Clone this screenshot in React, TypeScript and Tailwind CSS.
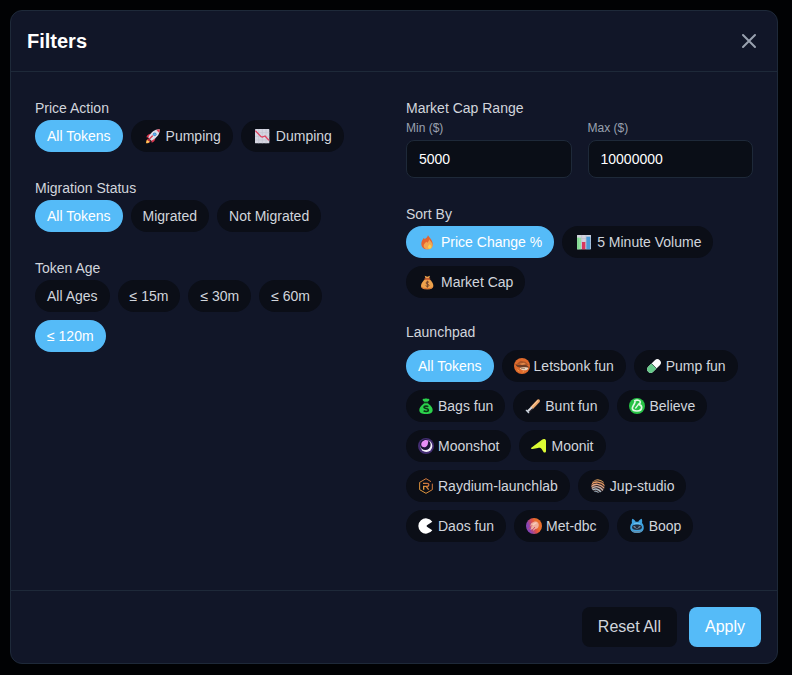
import * as React from "react";
import clsx from "clsx";

// ── Emoji icons ──────────────────────────────────────────────────────────────

interface IconProps {
  className?: string;
}

function Icon({ className, children }: IconProps & { children: React.ReactNode }) {
  return (
    <svg viewBox="0 0 48 48" aria-hidden="true" className={clsx("size-4 shrink-0", className)}>
      {children}
    </svg>
  );
}

function RocketIcon() {
  return (
    <Icon className="ml-0.5">
      <path d="M3 46c0-8 2-12 7-13l6 6c-1 5-5 7-13 7z" fill="#f9a03f" />
      <path d="M5 44c1-5 3-7 6-7l2 2c0 3-3 5-8 5z" fill="#ffd56b" />
      <path d="M18 17c-7 0-12 4-14 11l9 1zM31 30c0 7-4 12-11 14l-1-9z" fill="#d9374f" />
      <path d="M9 31l8 8-4 2-6-6z" fill="#b3263f" />
      <path d="M44 4c1 13-6 25-25 34L10 29C18 11 31 3 44 4z" fill="#dfe0ea" />
      <path d="M44 4c-4 0-7 1-10 2l8 8c2-3 2-7 2-10z" fill="#e2405a" />
      <circle cx="29" cy="19" r="5.5" fill="#3f7fc0" />
      <circle cx="29" cy="19" r="3.5" fill="#5fb4f0" />
      <path d="M13 33l9-9" stroke="#d9374f" strokeWidth="4" strokeLinecap="round" />
    </Icon>
  );
}

function ChartDownIcon() {
  return (
    <Icon className="ml-0.5">
      <rect y="3" width="43" height="43" rx="2" fill="#d6d6e2" />
      <path d="M0 14h43M0 25h43M0 36h43M11 3v43M22 3v43M33 3v43" stroke="#c2c2d0" strokeWidth="2" />
      <path d="M1 8l17 18 5 1 7-3 12 13" fill="none" stroke="#e0405f" strokeWidth="4" strokeLinejoin="round" />
    </Icon>
  );
}

function FireIcon() {
  return (
    <Icon className="ml-0.5">
      <path d="M24 3c1 6 14 13 14 27 0 10-7 16-17 16S4 39 4 29c0-8 4-13 8-18l2 5c3-3 9-6 10-13z" fill="#e5632f" />
      <path d="M27 16c2 5 11 9 11 18 0 8-6 12-14 12S11 41 11 35c0-6 5-9 8-12l3 3c3-2 5-5 5-10z" fill="#f2a650" />
      <path d="M29 30c4 4 5 6 5 9 0 3-2 5-5 5s-5-2-5-5 3-5 5-9z" fill="#fbd04b" />
    </Icon>
  );
}

function BarChartIcon() {
  return (
    <Icon className="ml-0.5">
      <rect x="3" y="3" width="42" height="43" rx="1" fill="#d3d3df" />
      <path d="M3 14h42M3 25h42M3 36h42M17 3v43M30 3v43" stroke="#bdbdcc" strokeWidth="2" />
      <path d="M4 11h11v35H4z" fill="#93e2a0" />
      <path d="M4 11h4v35H4z" fill="#7bd78c" />
      <path d="M18 24h10v22H18z" fill="#d8375f" />
      <path d="M31 8h12v38H31z" fill="#4a9bd8" />
    </Icon>
  );
}

function MoneyBagIcon() {
  return (
    <Icon className="ml-0.5">
      <path d="M14 5l8 3 8-3-3 9H17z" fill="#f0a24b" />
      <path d="M16 15h12c7 6 12 13 12 20 0 8-6 11-18 11S3 43 3 35c0-7 6-14 13-20z" fill="#eda24c" />
      <path d="M4 37c2 4 8 6 18 6s16-3 18-6c-1 7-8 9-18 9S5 44 4 37z" fill="#d5702f" />
      <path d="M15 15h14" stroke="#c4552d" strokeWidth="4" strokeLinecap="round" />
      <path d="M27 25c-2-2-9-2-9 2s9 3 9 7-7 4-10 1M22 20v21" fill="none" stroke="#6f432c" strokeWidth="3" />
    </Icon>
  );
}

// ── Launchpad logos ──────────────────────────────────────────────────────────

function BonkIcon() {
  return (
    <Icon>
      <circle cx="24" cy="24" r="24" fill="#df6a2c" />
      <path d="M9 17L20 8l14 3 10 9-18 2z" fill="#a8552a" />
      <path d="M4 19c12 3 22 1 30 2 6 1 10 4 11 8H20C12 29 6 25 4 19z" fill="#6b3c25" />
      <path d="M16 17l14-3 6 4-12 3z" fill="#e08a4c" />
      <path d="M17 30c6-3 14-3 26-1 0 5-5 8-12 8-6 0-11-2-14-7z" fill="#e6d6c2" />
      <path d="M21 31l12 1" stroke="#8a5a3a" strokeWidth="2" />
      <path d="M10 35l6 5M26 42l4-1" stroke="#f3a04a" strokeWidth="3" />
    </Icon>
  );
}

function PumpIcon() {
  return (
    <Icon>
      <defs>
        <clipPath id="pump-half">
          <path d="M0 0l48 48H0z" />
        </clipPath>
      </defs>
      <path d="M14 34l20-20" stroke="#fbfbfb" strokeWidth="21" strokeLinecap="round" />
      <g clipPath="url(#pump-half)">
        <path d="M14 34l20-20" stroke="#66c98a" strokeWidth="21" strokeLinecap="round" />
      </g>
      <path d="M16 16l16 16" stroke="#1b2a2a" strokeWidth="2" />
    </Icon>
  );
}

function BagsIcon() {
  return (
    <Icon>
      <path d="M14 4c4-4 7 0 10-3 3 3 6-1 10 3 1 4-3 6-5 7H19c-2-1-6-3-5-7z" fill="#2bd14c" />
      <path d="M17 14h14v4H17z" fill="#1fa53a" />
      <path d="M16 18h16c8 6 12 12 12 18 0 8-6 12-20 12S4 44 4 36c0-6 4-12 12-18z" fill="#2bd14c" />
      <path d="M31 26c-3-2-13-3-13 2s13 2 13 8-11 5-14 2" fill="none" stroke="#0b3515" strokeWidth="5" />
    </Icon>
  );
}

function BuntIcon() {
  return (
    <Icon>
      <path d="M37 5c5-3 10 2 7 7L24 33l-8-6z" fill="#e9a56b" />
      <path d="M38 8L22 25" stroke="#f8c796" strokeWidth="4" strokeLinecap="round" />
      <path d="M21 28L8 40" stroke="#d8dbe2" strokeWidth="6" />
      <path d="M24 32L12 42" stroke="#5b4b51" strokeWidth="2" />
      <path d="M4 37l7 7" stroke="#c7d0da" strokeWidth="4" strokeLinecap="round" />
    </Icon>
  );
}

function BelieveIcon() {
  return (
    <Icon>
      <circle cx="24" cy="24" r="24" fill="#27c246" />
      <path
        d="M17 8c6-3 17-2 17 4 0 4-3 6-6 7 6 1 10 4 10 9 0 8-7 11-14 11-9 0-14-3-14-8 0-7 6-10 8-19"
        fill="none"
        stroke="#e3f8e6"
        strokeWidth="5"
        strokeLinecap="round"
        strokeLinejoin="round"
      />
      <path d="M20 30l6-8" stroke="#e3f8e6" strokeWidth="4" strokeLinecap="round" />
    </Icon>
  );
}

function MoonshotIcon() {
  return (
    <Icon>
      <circle cx="24" cy="24" r="24" fill="#432d72" />
      <circle cx="25" cy="24" r="18" fill="#f4f0fa" />
      <circle cx="22" cy="20" r="16" fill="#1a1233" />
      <path d="M10 22C8 13 16 6 24 6c3 0 5 1 7 2-1 9-2 16-8 19-5 2-11 1-13-5z" fill="#e88df5" />
    </Icon>
  );
}

function MoonitIcon() {
  return (
    <Icon>
      <path
        d="M1 29L33 5c5-3 12-2 12 4v30c0 6-6 6-8 2l-5-8c-3-4-7-4-11-3L4 33c-4 0-5-2-3-4z"
        fill="#dcfb34"
      />
    </Icon>
  );
}

function RaydiumIcon() {
  return (
    <Icon>
      <defs>
        <linearGradient id="raydium" x1="0" y1="1" x2="1" y2="0">
          <stop offset="0" stopColor="#e8a33c" />
          <stop offset="1" stopColor="#c4683c" />
        </linearGradient>
      </defs>
      <path
        d="M43 17v18L24 46 5 35V13L24 2l15 9"
        fill="none"
        stroke="url(#raydium)"
        strokeWidth="3"
        strokeLinejoin="round"
      />
      <path
        d="M17 35V25h11c6 0 6-9 0-9H15M25 26l7 9"
        fill="none"
        stroke="url(#raydium)"
        strokeWidth="4"
      />
    </Icon>
  );
}

function JupIcon() {
  return (
    <Icon>
      <defs>
        <clipPath id="jup-disc">
          <circle cx="24" cy="24" r="20" />
        </clipPath>
      </defs>
      <g clipPath="url(#jup-disc)" fill="none" strokeWidth="4">
        <path d="M0 0h48v48H0z" fill="#33272a" />
        <path d="M4 12C16 2 32 4 46 16" stroke="#d9a05a" />
        <path d="M2 20C14 8 32 10 46 24" stroke="#e59a62" />
        <path d="M2 27C14 15 30 16 45 32" stroke="#e3a582" />
        <path d="M2 34C14 22 28 23 41 39" stroke="#c9b1a6" />
        <path d="M2 41C12 29 24 30 36 46" stroke="#aab6bf" />
        <path d="M6 47c6-10 14-10 22 0" stroke="#8fa3b0" />
      </g>
    </Icon>
  );
}

function DaosIcon() {
  return (
    <Icon>
      <path d="M43 11A23 23 0 1043 37L28 27c-3-2-3-4 0-6z" fill="#ffffff" />
    </Icon>
  );
}

function MeteoraIcon() {
  return (
    <Icon>
      <defs>
        <linearGradient id="meteora" x1="0" y1="0.7" x2="1" y2="0.3">
          <stop offset="0.2" stopColor="#8a45b5" />
          <stop offset="0.5" stopColor="#dd4f4a" />
          <stop offset="0.7" stopColor="#e96f2d" />
        </linearGradient>
      </defs>
      <circle cx="24" cy="24" r="24" fill="url(#meteora)" />
      <path d="M24 11c9-2 16 4 14 13-1 6-5 9-10 9l-6 5-2-5-7 3 3-8-3-3c0-8 4-12 11-14z" fill="#efaf9d" />
      <path d="M8 33l9-10M16 40l10-12" stroke="#c94a72" strokeWidth="3" strokeLinecap="round" />
      <path d="M22 20l8-5" stroke="#f9cdbd" strokeWidth="4" strokeLinecap="round" />
    </Icon>
  );
}

function BoopIcon() {
  return (
    <Icon>
      <path d="M10 2c5 2 8 5 10 9h8c2-4 5-7 10-9 2 4 2 9 1 13 5 5 6 12 5 18-2 8-9 12-20 12S6 41 4 33c-1-6 0-13 5-18-1-4-1-9 1-13z" fill="#3fa3e0" />
      <path d="M15 18c6-3 12-3 18 0" fill="none" stroke="#7cc8f2" strokeWidth="3" />
      <path d="M12 22c7-3 17-3 24 0 4 3 4 9 0 12-7 3-17 3-24 0-4-3-4-9 0-12z" fill="#202d40" />
      <path d="M14 26l6 2M34 26l-6 2" stroke="#a9bccb" strokeWidth="3" />
      <path d="M20 32h8" stroke="#8095a6" strokeWidth="2" />
      <path d="M7 36c9 4 25 4 34 0-3 6-9 9-17 9S10 42 7 36z" fill="#5f8fb0" />
    </Icon>
  );
}

// ── Options ──────────────────────────────────────────────────────────────────

interface Option {
  value: string;
  label: string;
  icon?: React.ReactNode;
  wide?: boolean;
}

const PRICE_ACTIONS: Option[] = [
  { value: "all", label: "All Tokens" },
  { value: "pumping", label: "Pumping", icon: <RocketIcon />, wide: true },
  { value: "dumping", label: "Dumping", icon: <ChartDownIcon />, wide: true },
];

const MIGRATION: Option[] = [
  { value: "all", label: "All Tokens" },
  { value: "migrated", label: "Migrated" },
  { value: "not-migrated", label: "Not Migrated" },
];

const AGES: Option[] = [
  { value: "all", label: "All Ages" },
  { value: "15", label: "≤ 15m" },
  { value: "30", label: "≤ 30m" },
  { value: "60", label: "≤ 60m" },
  { value: "120", label: "≤ 120m" },
];

const SORTS: Option[] = [
  { value: "change", label: "Price Change %", icon: <FireIcon />, wide: true },
  { value: "volume", label: "5 Minute Volume", icon: <BarChartIcon />, wide: true },
  { value: "mcap", label: "Market Cap", icon: <MoneyBagIcon />, wide: true },
];

const LAUNCHPADS: Option[] = [
  { value: "all", label: "All Tokens" },
  { value: "letsbonk", label: "Letsbonk fun", icon: <BonkIcon /> },
  { value: "pump", label: "Pump fun", icon: <PumpIcon /> },
  { value: "bags", label: "Bags fun", icon: <BagsIcon /> },
  { value: "bunt", label: "Bunt fun", icon: <BuntIcon /> },
  { value: "believe", label: "Believe", icon: <BelieveIcon /> },
  { value: "moonshot", label: "Moonshot", icon: <MoonshotIcon /> },
  { value: "moonit", label: "Moonit", icon: <MoonitIcon /> },
  { value: "raydium", label: "Raydium-launchlab", icon: <RaydiumIcon /> },
  { value: "jup", label: "Jup-studio", icon: <JupIcon /> },
  { value: "daos", label: "Daos fun", icon: <DaosIcon /> },
  { value: "met-dbc", label: "Met-dbc", icon: <MeteoraIcon /> },
  { value: "boop", label: "Boop", icon: <BoopIcon /> },
];

const DEFAULTS = {
  price: "all",
  migration: "all",
  age: "120",
  sort: "change",
  launchpad: "all",
  min: "5000",
  max: "10000000",
};

// ── Pieces ───────────────────────────────────────────────────────────────────

interface PillGroupProps {
  title: string;
  options: Option[];
  value: string;
  onChange: (value: string) => void;
  titleClass?: string;
}

function PillGroup({ title, options, value, onChange, titleClass = "leading-6" }: PillGroupProps) {
  const id = React.useId();
  return (
    <div role="group" aria-labelledby={id}>
      <h3 id={id} className={clsx("text-sm text-gray-300", titleClass)}>
        {title}
      </h3>
      <div className="flex flex-wrap gap-2">
        {options.map((o) => (
          <button
            key={o.value}
            type="button"
            aria-pressed={o.value === value}
            onClick={() => onChange(o.value)}
            className={clsx(
              "flex h-8 cursor-pointer items-center rounded-full px-3 text-sm whitespace-nowrap",
              o.wide ? "gap-[5px]" : "gap-1",
              o.value === value ? "bg-[#55bbf8] text-white" : "bg-[#0b0e17] text-gray-300",
            )}
          >
            {o.icon}
            {o.label}
          </button>
        ))}
      </div>
    </div>
  );
}

interface AmountFieldProps {
  label: string;
  value: string;
  onChange: (value: string) => void;
}

function AmountField({ label, value, onChange }: AmountFieldProps) {
  const id = React.useId();
  return (
    <div>
      <label htmlFor={id} className="mb-1 block text-xs text-gray-400">
        {label}
      </label>
      <input
        id={id}
        type="text"
        inputMode="numeric"
        value={value}
        onChange={(e) => onChange(e.target.value)}
        className="block w-full rounded-lg border border-gray-800 bg-[#0a0e17] px-3 py-2 text-sm text-white outline-none focus:border-[#55bbf8]"
      />
    </div>
  );
}

// ── Component ────────────────────────────────────────────────────────────────

export default function App() {
  const [filters, setFilters] = React.useState(DEFAULTS);

  function set(key: keyof typeof DEFAULTS) {
    return (value: string) => setFilters((prev) => ({ ...prev, [key]: value }));
  }

  return (
    <div className="min-h-screen bg-[#010204] py-[10px] pr-[14px] pl-[10px] font-['Liberation_Sans',Arial,sans-serif]">
      <div
        role="dialog"
        aria-labelledby="filters-title"
        className="max-w-3xl rounded-xl border border-gray-800 bg-[#111628]"
      >
        {/* Header */}
        <div className="flex items-center justify-between border-b border-gray-800 p-4">
          <h2 id="filters-title" className="text-xl font-bold text-white">
            Filters
          </h2>
          <button type="button" aria-label="Close" className="cursor-pointer text-gray-400">
            <svg viewBox="0 0 24 24" fill="none" stroke="currentColor" className="size-6">
              <path d="M6 18L18 6M6 6l12 12" strokeWidth="2" strokeLinecap="round" />
            </svg>
          </button>
        </div>

        {/* Filter groups */}
        <div className="grid grid-cols-2 gap-6 p-6 pb-12">
          <div className="space-y-6">
            <PillGroup title="Price Action" options={PRICE_ACTIONS} value={filters.price} onChange={set("price")} />
            <PillGroup title="Migration Status" options={MIGRATION} value={filters.migration} onChange={set("migration")} />
            <PillGroup title="Token Age" options={AGES} value={filters.age} onChange={set("age")} />
          </div>

          <div className="space-y-6">
            <div>
              <h3 className="text-sm leading-6 text-gray-300">Market Cap Range</h3>
              <div className="grid grid-cols-2 gap-4">
                <AmountField label="Min ($)" value={filters.min} onChange={set("min")} />
                <AmountField label="Max ($)" value={filters.max} onChange={set("max")} />
              </div>
            </div>
            <PillGroup title="Sort By" options={SORTS} value={filters.sort} onChange={set("sort")} />
            <PillGroup
              title="Launchpad"
              options={LAUNCHPADS}
              value={filters.launchpad}
              onChange={set("launchpad")}
              titleClass="mb-2"
            />
          </div>
        </div>

        {/* Footer */}
        <div className="flex justify-end gap-3 border-t border-gray-800 p-4">
          <button
            type="button"
            onClick={() => setFilters(DEFAULTS)}
            className="cursor-pointer rounded-lg bg-[#0b0e17] px-4 py-2 text-gray-300"
          >
            Reset All
          </button>
          <button type="button" className="cursor-pointer rounded-lg bg-[#55bbf8] px-4 py-2 text-white">
            Apply
          </button>
        </div>
      </div>
    </div>
  );
}
